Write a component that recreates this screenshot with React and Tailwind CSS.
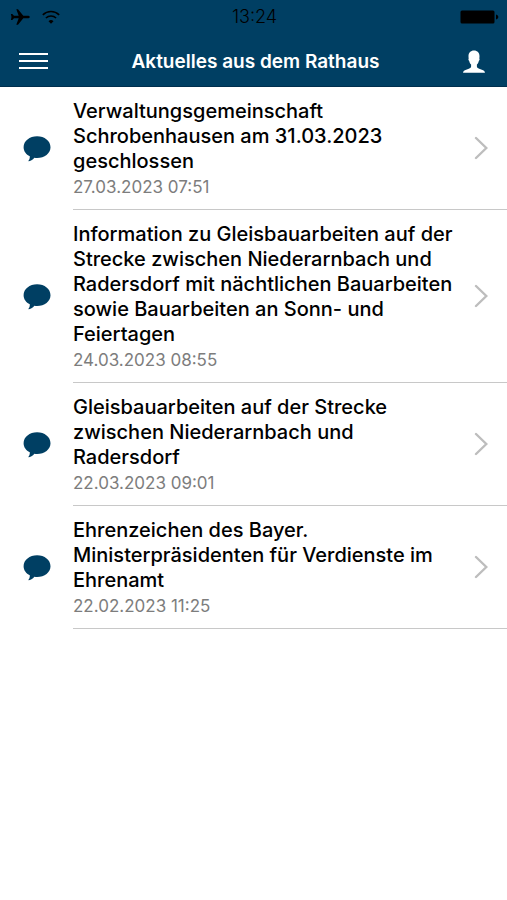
import React from 'react';

const news = [
	{
		id: 1,
		title: 'Verwaltungsgemeinschaft Schrobenhausen am 31.03.2023 geschlossen',
		date: '27.03.2023 07:51',
	},
	{
		id: 2,
		title:
			'Information zu Gleisbauarbeiten auf der Strecke zwischen Niederarnbach und Radersdorf mit nächtlichen Bauarbeiten sowie Bauarbeiten an Sonn- und Feiertagen',
		date: '24.03.2023 08:55',
	},
	{
		id: 3,
		title: 'Gleisbauarbeiten auf der Strecke zwischen Niederarnbach und Radersdorf',
		date: '22.03.2023 09:01',
	},
	{
		id: 4,
		title: 'Ehrenzeichen des Bayer. Ministerpräsidenten für Verdienste im Ehrenamt',
		date: '22.02.2023 11:25',
	},
];

const PlaneIcon = () => (
	<svg viewBox="0 0 20 16" className="w-5 h-4" fill="currentColor">
		<path d="M19.800 8c0 .8-1 1.300-2.200 1.300h-4.300L8 15.800H6.300L8.700 9.300H4L2.300 11H.9L1.500 8 .9 5h1.400L4 6.700h4.700L6.300.2H8l5.300 6.500h4.300c1.200 0 2.200.5 2.200 1.300z" />
	</svg>
);

const WifiIcon = () => (
	<svg viewBox="0 0 18 14" className="w-[18px] h-3.5" fill="none" stroke="currentColor">
		<path d="M.8 4.800a11.800 11.800 0 0 1 16.400 0" strokeWidth="1.600" />
		<path d="M3.900 8a7.400 7.400 0 0 1 10.200 0" strokeWidth="1.600" />
		<path d="M9 13.700 6.500 11.200a3.600 3.600 0 0 1 5 0z" fill="currentColor" stroke="none" />
	</svg>
);

const BatteryIcon = () => (
	<svg viewBox="0 0 39 14" className="w-[39px] h-3.5" fill="currentColor">
		<rect x="0.5" y="0.5" width="34" height="13" rx="1.5" />
		<path d="M36 4.500c1.600.4 2.300 1.300 2.300 2.500S37.600 9.100 36 9.500z" />
	</svg>
);

const PersonIcon = () => (
	<svg viewBox="0 0 22 23" className="w-[22px] h-[23px]" fill="currentColor">
		<path d="M11 .5c3.400 0 5.500 2.200 5.500 5.800 0 .8-.1 1.500-.2 2.100.5.400.400 1.600-.5 2.500-.4 1.700-1.100 2.900-1.900 3.700v1.900c0 1 .8 1.600 2.300 2.200l3.300 1.200c1.600.6 2.300 1.400 2.500 2.900H0c.2-1.500.9-2.300 2.500-2.900l3.300-1.200c1.500-.6 2.300-1.200 2.300-2.200v-1.900c-.8-.8-1.500-2-1.900-3.700-.9-.9-1-2.100-.5-2.500-.1-.6-.2-1.300-.2-2.100C5.500 2.700 7.600.5 11 .5z" />
	</svg>
);

const BubbleIcon = () => (
	<svg viewBox="0 0 28 26" className="w-7 h-[26px]" fill="currentColor">
		<path d="M14.100.3C21.600.3 27.500 5 27.500 11.200S21.600 21.900 14.100 21.900c-1 0-1.900-.1-2.700-.2-1.400 1.700-3.300 3.300-5.500 3.500-.5 0-.6-.4-.3-.8.9-1 1.300-2.300 1.200-4.200C3.100 18.500.6 15.200.6 11.200.6 5 6.600.3 14.100.3z" />
	</svg>
);

const ChevronIcon = () => (
	<svg
		viewBox="0 0 14 24"
		className="w-3.5 h-6"
		fill="none"
		stroke="currentColor"
		strokeWidth="2.400"
		strokeLinecap="round"
	>
		<path d="M2 2 12.300 12 2 22" />
	</svg>
);

const NewsItem = ({ item }) => (
	<li>
		<a href={`#news-${item.id}`} className="flex items-stretch">
			<div className="w-[73px] shrink-0 flex items-center pl-[23px] text-[#003f63]">
				<BubbleIcon />
			</div>
			<div className="flex-1 flex items-center justify-between border-b border-[#c8c8c8] pt-3 pb-3 pr-[19px]">
				<div className="flex-1 flex flex-col gap-[3px]">
					<h2 className="text-[20px] leading-[25px] font-medium text-black">
						{item.title}
					</h2>
					<time className="text-[17px] leading-[20px] text-[#7d7d7d]">
						{item.date}
					</time>
				</div>
				<div className="w-6 shrink-0 flex justify-end text-[#bdbdbd]">
					<ChevronIcon />
				</div>
			</div>
		</a>
	</li>
);

const App = () => {
	return (
		<div className="min-h-screen bg-white font-['Inter',sans-serif]">
			<header className="bg-[#003f63] border-b border-[#002f4e]">
				<div className="grid grid-cols-3 items-center h-[34px] pl-2.5 pr-2 text-black">
					<div className="flex items-center gap-3">
						<PlaneIcon />
						<WifiIcon />
					</div>
					<span className="text-center text-[18px] leading-[20px] font-light">
						13:24
					</span>
					<div className="flex justify-end">
						<BatteryIcon />
					</div>
				</div>
				<div className="flex items-center justify-between h-[52px] pt-0.5 pl-[19px] pr-[22px] text-white">
					<button aria-label="Menü" className="flex flex-col gap-[5px] w-[29px]">
						<span className="h-0.5 w-full bg-white" />
						<span className="h-0.5 w-full bg-white" />
						<span className="h-0.5 w-full bg-white" />
					</button>
					<h1 className="text-[19px] leading-[25px] font-semibold">
						Aktuelles aus dem Rathaus
					</h1>
					<button aria-label="Profil">
						<PersonIcon />
					</button>
				</div>
			</header>
			<main>
				<ul>
					{news.map((item) => (
						<NewsItem key={item.id} item={item} />
					))}
				</ul>
			</main>
		</div>
	);
};

export default App;
